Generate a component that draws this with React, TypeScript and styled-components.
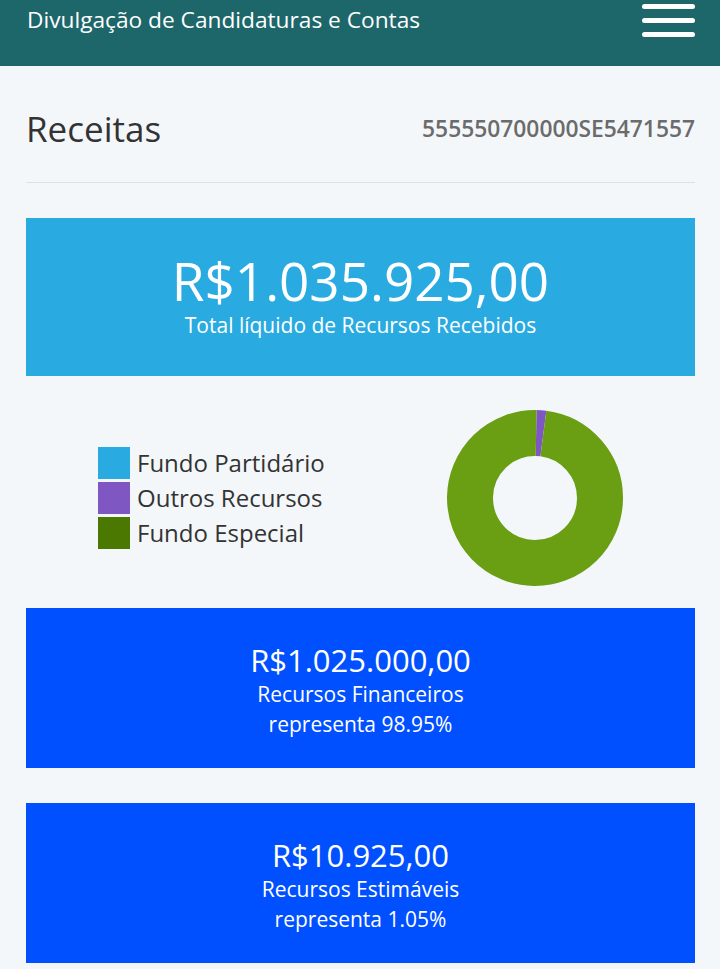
import React from 'react';
import styled, { createGlobalStyle } from 'styled-components';

const GlobalStyle = createGlobalStyle`
  body {
    margin: 0;
    background: #f4f7fa;
    font-family: 'Open Sans', 'Noto Sans', sans-serif;
    color: #333;
  }
`;

interface Slice {
  label: string;
  value: number;
  color: string;
  legendColor: string;
}

const slices: Slice[] = [
  { label: 'Fundo Partidário', value: 0, color: '#29abe2', legendColor: '#29abe2' },
  { label: 'Outros Recursos', value: 1.8, color: '#7e57c2', legendColor: '#7e57c2' },
  { label: 'Fundo Especial', value: 98.2, color: '#6a9e13', legendColor: '#4a7800' },
];

const cards = [
  { amount: 'R$1.025.000,00', label: 'Recursos Financeiros', share: 'representa 98.95%' },
  { amount: 'R$10.925,00', label: 'Recursos Estimáveis', share: 'representa 1.05%' },
];

const Donut: React.VFC = () => {
  const total = slices.reduce((s, x) => s + x.value, 0);
  const cx = 88;
  const cy = 88;
  const r = 65;
  const stroke = 46;
  const circ = 2 * Math.PI * r;
  let offset = 0;
  return (
    <svg width="176" height="176" viewBox="0 0 176 176">
      <g transform={`rotate(-89 ${cx} ${cy})`}>
        {slices.map((s) => {
          const len = (s.value / total) * circ;
          const el = (
            <circle
              key={s.label}
              cx={cx}
              cy={cy}
              r={r}
              fill="none"
              stroke={s.color}
              strokeWidth={stroke}
              strokeDasharray={`${len} ${circ - len}`}
              strokeDashoffset={-offset}
            />
          );
          offset += len;
          return el;
        })}
      </g>
    </svg>
  );
};

export default function App() {
  return (
    <>
      <GlobalStyle />
      <NavBar>
        <Brand>Divulgação de Candidaturas e Contas</Brand>
        <Burger aria-label="menu">
          <span />
          <span />
          <span />
        </Burger>
      </NavBar>
      <Main>
        <TitleRow>
          <PageTitle>Receitas</PageTitle>
          <CandidateId>555550700000SE5471557</CandidateId>
        </TitleRow>
        <Divider />
        <TotalBox>
          <TotalAmount>R$1.035.925,00</TotalAmount>
          <TotalLabel>Total líquido de Recursos Recebidos</TotalLabel>
        </TotalBox>
        <ChartRow>
          <Legend>
            {slices.map((s) => (
              <LegendItem key={s.label}>
                <Swatch color={s.legendColor} />
                {s.label}
              </LegendItem>
            ))}
          </Legend>
          <ChartWrap>
            <Donut />
          </ChartWrap>
        </ChartRow>
        {cards.map((c) => (
          <ResourceBox key={c.label}>
            <ResourceAmount>{c.amount}</ResourceAmount>
            <ResourceText>{c.label}</ResourceText>
            <ResourceText>{c.share}</ResourceText>
          </ResourceBox>
        ))}
      </Main>
    </>
  );
}

const NavBar = styled.header`
  display: flex;
  justify-content: space-between;
  align-items: flex-start;
  height: 66px;
  padding: 0 25px 0 27px;
  background: #1d676b;
  box-sizing: border-box;
`;

const Brand = styled.div`
  color: #fff;
  font-size: 22.7px;
  line-height: 40px;
`;

const Burger = styled.div`
  display: flex;
  flex-direction: column;
  gap: 9px;
  width: 53px;
  padding-top: 4px;

  span {
    display: block;
    height: 5px;
    border-radius: 3px;
    background: #fff;
  }
`;

const Main = styled.main`
  padding: 0 25px 0 26px;
`;

const TitleRow = styled.div`
  display: flex;
  justify-content: space-between;
  align-items: center;
  height: 116px;
  padding-top: 8px;
  box-sizing: border-box;
`;

const PageTitle = styled.h1`
  margin: 0;
  font-size: 35px;
  font-weight: 400;
  color: #333;
`;

const CandidateId = styled.div`
  font-size: 22.8px;
  font-weight: 600;
  color: #6b6b6b;
`;

const Divider = styled.hr`
  margin: 0;
  border: none;
  border-top: 1px solid #dde1e5;
`;

const TotalBox = styled.section`
  display: flex;
  flex-direction: column;
  align-items: center;
  margin-top: 35px;
  height: 158px;
  padding-top: 32px;
  box-sizing: border-box;
  background: #29abe2;
  color: #fff;
`;

const TotalAmount = styled.div`
  font-size: 53px;
  line-height: 62px;
`;

const TotalLabel = styled.div`
  font-size: 21px;
  line-height: 26px;
`;

const ChartRow = styled.div`
  display: flex;
  align-items: center;
  height: 232px;
`;

const Legend = styled.ul`
  list-style: none;
  margin: 12px 0 0;
  padding: 0 0 0 72px;
  flex: 1;
  display: flex;
  flex-direction: column;
  gap: 3px;
`;

const LegendItem = styled.li`
  display: flex;
  align-items: center;
  gap: 7px;
  font-size: 24px;
  line-height: 32px;
  color: #333;
`;

const Swatch = styled.span<{ color: string }>`
  display: inline-block;
  width: 32px;
  height: 32px;
  background: ${({ color }) => color};
`;

const ChartWrap = styled.div`
  width: 176px;
  height: 176px;
  margin-right: 72px;
  margin-top: 12px;
`;

const ResourceBox = styled.section`
  display: flex;
  flex-direction: column;
  align-items: center;
  height: 160px;
  padding-top: 33px;
  margin-bottom: 35px;
  box-sizing: border-box;
  background: #0050ff;
  color: #fff;
`;

const ResourceAmount = styled.div`
  font-size: 31px;
  line-height: 38px;
`;

const ResourceText = styled.div`
  font-size: 21px;
  line-height: 30px;
`;
